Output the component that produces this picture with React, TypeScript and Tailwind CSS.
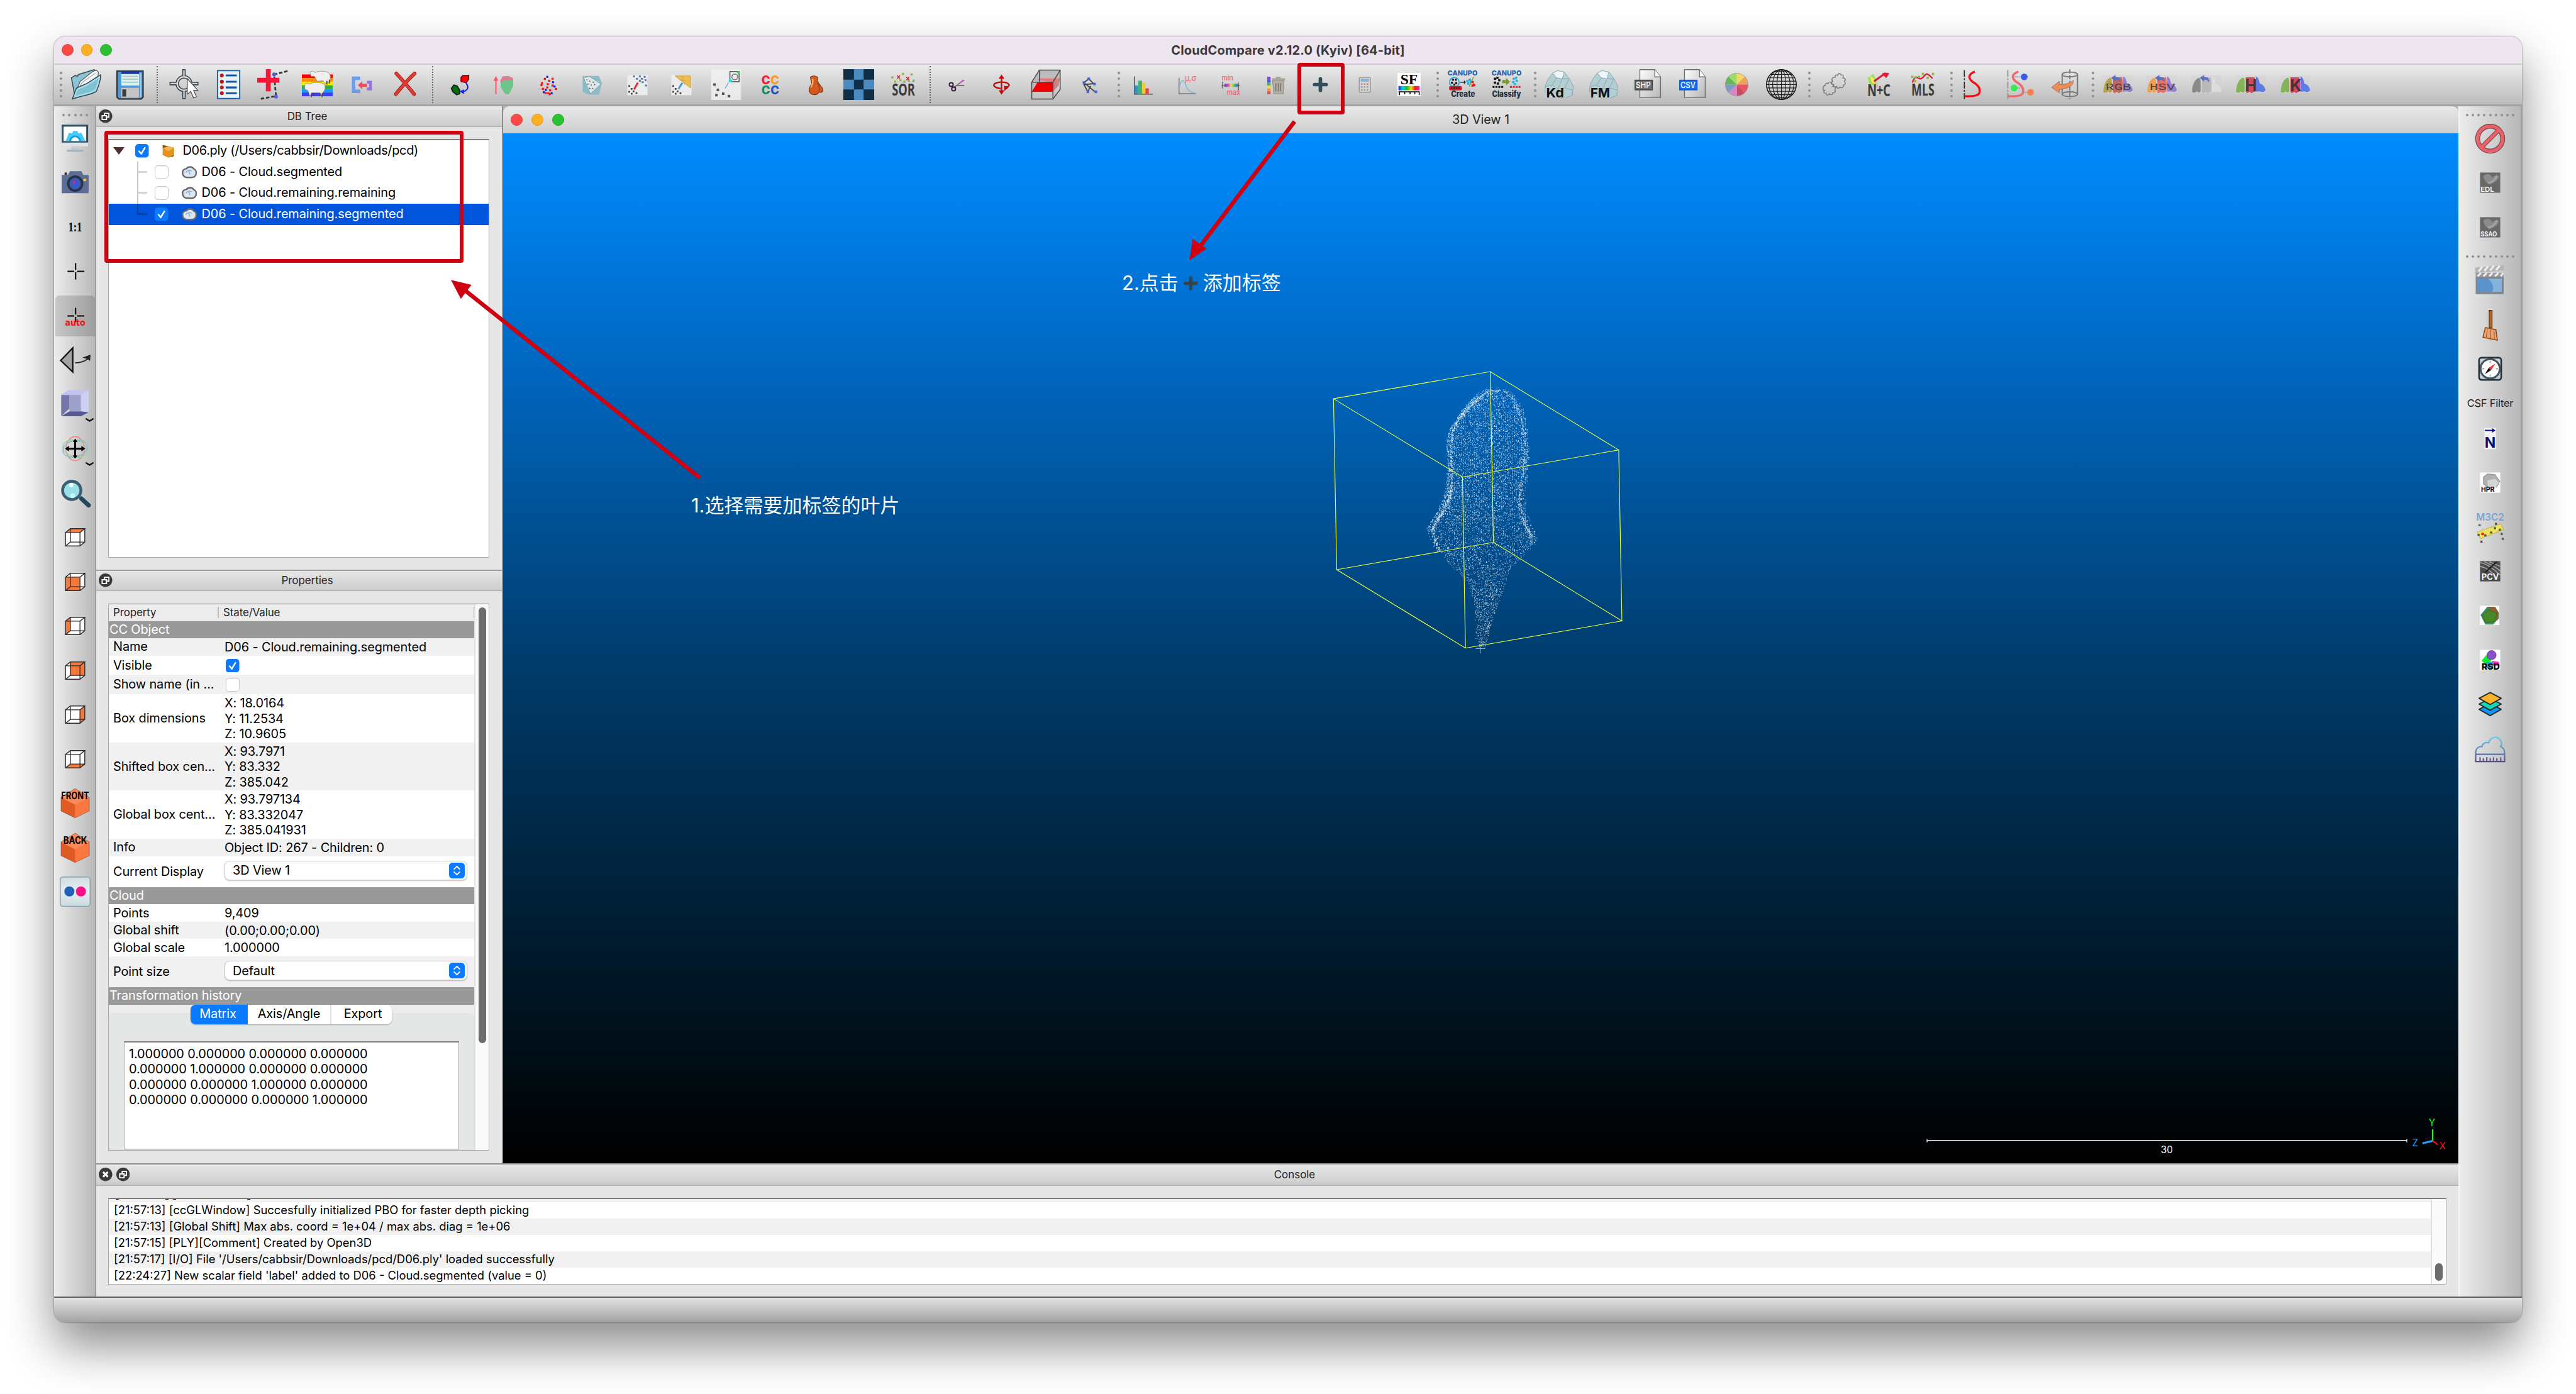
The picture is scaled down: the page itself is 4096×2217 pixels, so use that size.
import type { ReactNode } from 'react';

/* ---------- shared bits ---------- */

function Svg({ children, box = '0 0 64 64', cls = 'w-[49px] h-[49px]' }: { children: ReactNode; box?: string; cls?: string }) {
  return (
    <svg viewBox={box} className={cls + ' shrink-0 overflow-visible'} fill="none">
      {children}
    </svg>
  );
}

function Slot({ children }: { children: ReactNode }) {
  return <div className="w-[70.515px] h-full shrink-0 flex items-center justify-center">{children}</div>;
}

function VSlot({ children, on }: { children: ReactNode; on?: boolean }) {
  return (
    <div className="h-[70.515px] w-full shrink-0 flex items-center justify-center py-[3px]">
      <div className={'w-full h-full flex items-center justify-center ' + (on ? 'rounded-t-md bg-black/15' : '')}>{children}</div>
    </div>
  );
}

function Handle({ first }: { first?: boolean }) {
  return (
    <div className={(first ? 'w-[15.3px]' : 'w-[13.8px]') + ' h-full shrink-0 flex flex-col items-end justify-center gap-[5.2px] pr-[2px]'}>
      {[0, 1, 2, 3, 4].map((i) => (
        <span key={i} className="w-[4px] h-[4px] rounded-full bg-[#8f8f8f]" />
      ))}
    </div>
  );
}

function HHandle({ n, first }: { n: number; first?: boolean }) {
  return (
    <div className={(first ? 'h-[16px]' : 'h-[13.8px]') + ' w-full shrink-0 flex items-end justify-center gap-[5.2px]'}>
      {Array.from({ length: n }, (_, i) => (
        <span key={i} className="w-[4px] h-[4px] rounded-full bg-[#8f8f8f]" />
      ))}
    </div>
  );
}

function Sep() {
  return (
    <div className="w-[15.33px] h-full shrink-0 flex justify-center py-[2px]">
      <div className="border-l-2 border-dotted border-[#6a6a6a]" />
    </div>
  );
}

const SANS = 'Inter, sans-serif';

function Label({ x, y, s, c = '#222', t, w = 700, len, f = SANS }: { x: number; y: number; s: number; c?: string; t: string; w?: number; len?: number; f?: string }) {
  return (
    <text x={x} y={y} fontSize={s} fill={c} fontWeight={w} textAnchor="middle" fontFamily={f} textLength={len} lengthAdjust="spacingAndGlyphs">
      {t}
    </text>
  );
}

/* ---------- main toolbar icons ---------- */

const IOpen = (
  <Svg>
    <path d="M2 18l8-5 4 2 3-4 32-10 7 5v30L10 60z" fill="#8ec3d3" stroke="#2f4a55" strokeWidth="2" />
    <path d="M12 46L20 26 46 5l8-3 4 4-2 22z" fill="#f4f6f7" stroke="#555" strokeWidth="1.5" />
    <path d="M16 44L24 28 52 8" stroke="#9aa" strokeWidth="1.5" />
    <path d="M4 62l8-22c6-4 20-8 28-14L62 12c2 4-2 20-8 34-10 8-30 8-50 16z" fill="#a9dbe8" stroke="#2f4a55" strokeWidth="2" />
    <path d="M10 56l6-14c10-3 24-8 42-24-2 10-4 18-7 24-12 8-28 8-41 14z" fill="#6fb8cc" opacity=".7" />
  </Svg>
);
const ISave = (
  <Svg>
    <path d="M4 4h54v54l-4 4H8l-4-4z" fill="#4a9be0" stroke="#30353c" strokeWidth="3" />
    <rect x="13" y="6" width="37" height="28" fill="#dff1ef" />
    <rect x="13" y="5" width="37" height="5" fill="#1a35a8" />
    <path d="M15 15h33M15 21h33M15 27h33" stroke="#a9c9c9" strokeWidth="2.5" />
    <rect x="12" y="38" width="38" height="22" fill="#c4c4c4" stroke="#777" />
    <rect x="15" y="42" width="8" height="15" fill="#3d3d3d" />
    <path d="M53 8v50" stroke="#9fd0f5" strokeWidth="3" />
  </Svg>
);
const IPick = (
  <Svg>
    <g stroke="#3b444c" strokeWidth="7">
      <circle cx="32" cy="30" r="14" />
      <path d="M32 0v18M32 42v20M2 30h18M44 30h18" />
    </g>
    <g stroke="#cfd4d8" strokeWidth="3">
      <circle cx="32" cy="30" r="14" />
      <path d="M32 2v15M32 43v17M4 30h15M45 30h15" />
    </g>
    <path d="M39 20v32l7-6 6 14 6-3-6-13h9z" fill="#fff" stroke="#444" strokeWidth="1.5" />
  </Svg>
);
const IList = (
  <Svg>
    <rect x="9" y="3" width="46" height="58" fill="#e8f2fb" stroke="#1f5fa8" strokeWidth="2.5" />
    {[13, 26, 38, 50].map((y) => (
      <g key={y}>
        <circle cx="18" cy={y} r="4" fill="#c01818" />
        <path d={`M26 ${y}h23`} stroke="#1557a5" strokeWidth="4" />
      </g>
    ))}
  </Svg>
);
const IPolyPlus = (
  <Svg>
    <path d="M63 4L35 11 39 56 5 62" stroke="#333" strokeWidth="3.5" strokeDasharray="7 4" />
    <path d="M23 0v46M0 23h46" stroke="#ff1238" strokeWidth="10" />
    <circle cx="35" cy="11" r="4" fill="#5560d8" />
    <circle cx="39" cy="57" r="4" fill="#5560d8" />
  </Svg>
);
const ISheep = (
  <Svg>
    {['#ff0000', '#ff8a10', '#ffe600', '#2fae3a', '#2196f3', '#3c3cf0'].map((c, i) => (
      <rect key={c} x="0" y={11 + i * 7.5} width="64" height="7.6" fill={c} />
    ))}
    <g fill="#f1eeee" stroke="#8a8585" strokeWidth="1">
      <path d="M17 7c4-5 8-2 10 0 10-4 24-4 30 2 4 6 2 14-2 18l-4-1-2 5-5-7-12 1-6-10-7 0z" />
      <path d="M6 32c4-4 8-3 9-1 10-5 24-4 31 0 5 6 1 15-3 18l-3 7-3-7H20l-3 8-4-12-7-4z" />
    </g>
    <path d="M20 52v6M24 50v6M42 50v8M38 50v6M52 24v8M57 22v8" stroke="#444" strokeWidth="2" />
  </Svg>
);
const IBracket = (
  <Svg>
    <path d="M30 19H16v27h14" stroke="#6f9bea" strokeWidth="7" />
    <path d="M44 27h7v14h-7" stroke="#9a72dd" strokeWidth="6" />
    <path d="M25 33l9-8v5h10v7H34v5z" fill="#f6485f" />
  </Svg>
);
const IDelete = (
  <Svg>
    <path d="M12 9C24 22 38 38 49 52M50 9C36 22 22 38 11 52" stroke="#a31a12" strokeWidth="7.5" strokeLinecap="round" />
    <path d="M12 9C24 22 38 38 49 52M50 9C36 22 22 38 11 52" stroke="#e23b33" strokeWidth="5" strokeLinecap="round" />
  </Svg>
);
const IRegister = (
  <Svg>
    <path d="M34 26V17l4-4h12v8l-5 7z" fill="#ff0000" stroke="#5c0000" strokeWidth="2" />
    <path d="M19 33l7 2 5 8v8l-6 2-8-6-3-7z" fill="#0a6a10" stroke="#042c10" strokeWidth="2.5" />
    <path d="M44 29c8 8 4 16-8 18" stroke="#0b1cff" strokeWidth="2.5" />
    <path d="M31 46l9-4v10z" fill="#0b1cff" />
  </Svg>
);
const IMatch = (
  <Svg>
    <path d="M15 52V18" stroke="#ff5565" strokeWidth="2.5" />
    <path d="M10 24l5-10 5 10z" fill="#ff5565" />
    <path d="M24 24l5-9 12-1 10 5-1 9-24 5z" fill="#d97f93" />
    <path d="M25 28l8-5h18v12l-9 17h-7l-10-14z" fill="#6fc48b" />
  </Svg>
);
const dots = (pts: number[][], c: string, r = 2) => pts.map(([x, y], i) => <rect key={i} x={x - r} y={y - r} width={2 * r} height={2 * r} fill={c} />);
const ISubsample = (
  <Svg>
    {dots([[24, 20], [33, 24], [40, 20], [18, 29], [30, 31], [40, 34], [20, 41], [29, 38], [35, 44], [17, 33], [31, 50], [26, 50], [47, 41], [34, 52]], '#f01010', 2.1)}
    {dots([[29, 16], [41, 27], [44, 36], [26, 43], [38, 50], [22, 48]], '#1020f0', 2.1)}
  </Svg>
);
const IMesh = (
  <Svg>
    <path d="M11 14h34l6 15-6 24H22l-11-6z" fill="#7fbac6" opacity=".85" />
    <path d="M13 18l12-3 24 16-22 20z" fill="#dfe6e8" stroke="#76929a" />
    {dots([[20, 22], [26, 25], [33, 27], [22, 31], [29, 33], [36, 32], [26, 40], [32, 40]], '#444', 1)}
  </Svg>
);
const IC2C = (
  <Svg>
    <rect x="11" y="12" width="42" height="42" fill="#ececec" />
    {dots([[25, 15], [37, 15], [47, 16], [31, 20], [41, 20], [49, 23], [43, 27], [50, 34], [37, 24]], '#5c7fa8', 2)}
    {dots([[15, 35], [20, 41], [15, 47], [24, 46], [30, 50], [20, 51]], '#444', 1.8)}
    <path d="M25 42l8-14" stroke="#d03838" strokeWidth="4" />
  </Svg>
);
const IC2M = (
  <Svg>
    <rect x="11" y="12" width="42" height="42" fill="#ececec" />
    <path d="M19 14h32v25z" fill="#f0bd50" stroke="#b58527" />
    <path d="M27 22l14 2M33 14l6 18" stroke="#c89a3a" />
    {dots([[15, 35], [20, 41], [15, 47], [24, 46], [30, 50], [20, 51]], '#444', 1.8)}
    <path d="M26 41l8-13" stroke="#4b9bd8" strokeWidth="4" />
  </Svg>
);
const IPlane = (
  <Svg>
    <rect x="1" y="0" width="62" height="64" fill="#f0f0f0" opacity=".85" />
    <rect x="40" y="5" width="19" height="21" stroke="#555" strokeWidth="2" />
    <circle cx="50" cy="16" r="6" stroke="#777" strokeWidth="2" />
    <circle cx="58" cy="7" r="3" fill="#39d353" />
    <circle cx="41" cy="24" r="3.5" fill="#19e0e0" />
    <path d="M30 40l7-12" stroke="#86abcc" strokeWidth="2" />
    {dots([[8, 32], [15, 43], [12, 54], [26, 51], [38, 56]], '#555', 2.6)}
  </Svg>
);
const ICCCC = (
  <Svg>
    <Label x={23} y={31} s={24} c="#ff1430" t="C" w={800} />
    <Label x={42} y={31} s={24} c="#ff9a16" t="C" w={800} />
    <Label x={23} y={52} s={24} c="#138a5e" t="C" w={800} />
    <Label x={42} y={52} s={24} c="#1d52c8" t="C" w={800} />
  </Svg>
);
const IBone = (
  <Svg>
    <path d="M23 17c2-4 12-4 15 0l-1 7 4 6 7 10c3 7-3 10-7 7-3 8-16 8-20 0-2-8 2-13 5-16z" fill="#d35a1c" stroke="#7c2d0a" strokeWidth="1.5" />
    <path d="M27 20c2 4 0 12-3 18" stroke="#ffae78" strokeWidth="3" />
    <path d="M38 28c2 4 4 10 3 16" stroke="#8a3510" strokeWidth="1.5" />
  </Svg>
);
const IChecker = (
  <Svg>
    <rect width="64" height="64" fill="#0f2e46" />
    <path d="M22 0h20v22H22zM0 22h22v20H0zM42 22h22v20H42zM22 42h20v22H22z" fill="#4a8cc2" />
  </Svg>
);
const ISOR = (
  <Svg>
    {dots([[9, 17], [31, 10], [49, 11], [15, 26], [34, 26], [43, 24], [53, 24], [26, 23]], '#8bb34f', 2.2)}
    <path d="M19 13l6 7m0-7l-6 7M38 16l6 7m0-7l-6 7" stroke="#c92a3a" strokeWidth="2" />
    <Label x={32} y={55} s={34} c="#3b3b3b" t="SOR" len={48} f="Open Sans, sans-serif" />
  </Svg>
);
const IScissors = (
  <Svg>
    <path d="M24 39l20-16M28 34l18 0" stroke="#777" strokeWidth="2.5" />
    <path d="M36 29l10-6" stroke="#cc59cc" strokeWidth="2.5" />
    <circle cx="19" cy="32" r="4" stroke="#3a1740" strokeWidth="2.5" />
    <circle cx="24" cy="41" r="4" stroke="#3a1740" strokeWidth="2.5" />
  </Svg>
);
const IMove = (
  <Svg>
    <g stroke="#c00808" strokeWidth="3">
      <path d="M32 16v32" />
      <path d="M48 33c-2-5-9-6-16-6s-16 2-16 6 8 7 14 7M48 33c0 2-4 4-9 5" />
    </g>
    <path d="M32 11l6 9H26zM32 53l6-9H26zM37 34l10 4-9 7z" fill="#c00808" />
  </Svg>
);
const IClipBox = (
  <Svg>
    <path d="M3 26L18 3h43v20L46 47H3z" fill="#bdbdbd" />
    <path d="M13 22l5-3h43l-4 10-9 0z" fill="#e77b7b" />
    <path d="M2 47L14 27h32l0 20z" fill="#f00000" />
    <path d="M46 27l14-8-2 15-12 13z" fill="#c98282" />
    <path d="M2 27h44v35H2zM2 27L18 2h43v40L46 62M46 27L61 2M18 2v24" stroke="#4a4a4a" strokeWidth="2" />
  </Svg>
);
const IPolyTrace = (
  <Svg>
    <path d="M29 20L19 28l23 19M29 20l10 10-20 2 8 15 6-12" stroke="#4a4a4a" strokeWidth="2.5" />
    {dots([[29, 20], [19, 28], [41, 31], [27, 47], [44, 47]], '#3f5fe0', 2.6)}
  </Svg>
);
const IHist = (
  <Svg>
    <path d="M14 15v37h38" stroke="#555" strokeWidth="2" />
    <rect x="14" y="34" width="8" height="17" fill="#3f8fbf" />
    <rect x="22" y="24" width="8" height="27" fill="#3db577" />
    <rect x="30" y="28" width="7" height="23" fill="#eacb3a" />
    <rect x="37" y="40" width="7" height="11" fill="#ee3f4c" />
  </Svg>
);
const IStats = (
  <Svg>
    <path d="M14 18v33h35" stroke="#777" strokeWidth="2" />
    <path d="M15 38c2-16 8-18 12-8 4 12 8 18 20 20" stroke="#7fb7d8" strokeWidth="2" />
    <Label x={38} y={25} s={17} c="#f4707c" t="μ,σ" w={500} len={24} />
  </Svg>
);
const IMinMax = (
  <Svg>
    <defs>
      <linearGradient id="rb">
        <stop offset="0" stopColor="#6a3ad0" />
        <stop offset=".3" stopColor="#e050b0" />
        <stop offset=".5" stopColor="#f4e04a" />
        <stop offset=".75" stopColor="#49c96a" />
        <stop offset="1" stopColor="#3a62d0" />
      </linearGradient>
    </defs>
    <Label x={23} y={23} s={15} c="#f4606e" t="min" w={500} len={24} />
    <Label x={36} y={53} s={15} c="#f4606e" t="max" w={500} len={28} />
    <path d="M13 26v14M46 28v16M11 34h38" stroke="#666" strokeWidth="2" />
    <rect x="17" y="30" width="27" height="7" fill="url(#rb)" />
  </Svg>
);
const ITrash = (
  <Svg>
    {['#7b46d8', '#4a56e0', '#45b06a', '#e8df4d', '#f2983c', '#ee4a68'].map((c, i) => (
      <rect key={c} x="13" y={16 + i * 6} width="7" height="6" fill={c} />
    ))}
    <path d="M24 24h24l-2 27H27z" fill="#b4b0a8" stroke="#8d897f" strokeWidth="1.5" />
    <path d="M23 19h27v5H23zM31 16h10v3H31z" fill="#a9a59b" />
    <path d="M31 29v17M36 29v17M41 29v17" stroke="#77736a" strokeWidth="2" />
  </Svg>
);
const IPlus = (
  <Svg>
    <path d="M32 20v24M20 32h24" stroke="#33505a" strokeWidth="7.5" strokeLinecap="round" />
  </Svg>
);
const ICalc = (
  <Svg>
    <rect x="20" y="17" width="23" height="31" rx="2" fill="#d6d6d6" stroke="#999" strokeWidth="2" />
    <rect x="23" y="20" width="17" height="6" fill="#89b4dc" />
    {dots([[25, 31], [31, 31], [25, 37], [31, 37], [37, 37], [25, 43], [31, 43], [37, 43]], '#999', 1.6)}
    {dots([[37, 31]], '#e86a6a', 1.6)}
  </Svg>
);
const ISF = (
  <Svg>
    <defs>
      <linearGradient id="sf">
        <stop offset="0" stopColor="#1a20d0" />
        <stop offset=".2" stopColor="#10d0f0" />
        <stop offset=".4" stopColor="#20c020" />
        <stop offset=".6" stopColor="#f0e010" />
        <stop offset=".78" stopColor="#f02010" />
        <stop offset="1" stopColor="#f020d0" />
      </linearGradient>
    </defs>
    <rect x="8" y="8" width="48" height="48" fill="#fff" />
    <Label x={32} y={31} s={29} c="#000" t="SF" len={36} f="Liberation Serif, serif" />
    <rect x="10" y="35" width="44" height="9" fill="url(#sf)" />
    <path d="M10 47h44M12 46v8M23 46v6M34 46v6M44 46v6M53 46v8" stroke="#000" strokeWidth="2" />
  </Svg>
);
const ICanupoCreate = (
  <Svg>
    <Label x={32} y={13} s={14} c="#1d63b5" t="CANUPO" w={800} len={62} />
    <circle cx="15" cy="27" r="10" stroke="#21aee6" strokeWidth="2.5" />
    {dots([[12, 22], [18, 22], [10, 28], [15, 32], [19, 29]], '#111', 2)}
    <path d="M27 27h9" stroke="#222" strokeWidth="2" />
    <path d="M35 23l4 4-4 4z" fill="#222" />
    <path d="M55 16L46 36" stroke="#86a63a" strokeWidth="2" />
    {dots([[42, 25], [47, 22], [44, 30], [49, 26]], '#21aee6', 2.4)}
    {dots([[53, 27], [56, 33], [53, 34]], '#f01818', 2.4)}
    <rect x="4" y="35" width="27" height="9" rx="4" fill="#e21c2c" />
    <path d="M8 39h20" stroke="#111" strokeWidth="3" strokeDasharray="3 2" />
    <Label x={33} y={58} s={17} c="#1d2a38" t="Create" w={800} len={50} />
  </Svg>
);
const ICanupoClassify = (
  <Svg>
    <Label x={32} y={13} s={14} c="#1d63b5" t="CANUPO" w={800} len={62} />
    {dots([[8, 20], [13, 18], [17, 23], [8, 28], [14, 30]], '#111', 2.3)}
    <path d="M23 23h8v-5l8 8-8 8v-5h-8z" fill="#7b9a25" />
    {dots([[47, 20], [52, 18], [46, 27], [53, 24], [50, 31]], '#21aee6', 2.3)}
    <path d="M3 37h24" stroke="#111" strokeWidth="4" strokeDasharray="4 2" />
    <path d="M39 37h24" stroke="#f01818" strokeWidth="4" strokeDasharray="4 2" />
    <Label x={32} y={58} s={17} c="#1d2a38" t="Classify" w={800} len={60} />
  </Svg>
);
const rock = (
  <>
    <path d="M2 48C0 34 8 20 18 8l10-5 14 3 11 14 8 16-2 18-14 6H10z" fill="#b4cfd3" />
    <path d="M18 8l12-5 12 4-4 14-12-4z" fill="#edf6fb" />
    <g stroke="#8aa8ae" strokeWidth="1.3">
      <path d="M2 48C0 34 8 20 18 8l10-5 14 3 11 14 8 16-2 18-14 6M18 8l8 10 12 2 4-14M26 18l-9 15-14 3M38 20l14 0M17 33l12 8 9-21M29 41l14-2 9-19M43 39l16 4M29 41l3 10" />
    </g>
  </>
);
const IKd = (
  <Svg>
    {rock}
    <Label x={23} y={59} s={27} c="#111" t="Kd" len={37} />
  </Svg>
);
const IFM = (
  <Svg>
    {rock}
    <Label x={24} y={59} s={27} c="#111" t="FM" len={41} />
  </Svg>
);
function FileIcon({ t, c, b }: { t: string; c: string; b: string }) {
  return (
    <Svg>
      <defs>
        <linearGradient id="fg" x2="1" y2="1">
          <stop offset="0" stopColor="#fff" />
          <stop offset="1" stopColor="#b5b5b5" />
        </linearGradient>
      </defs>
      <path d="M15 1h31l12 15v43H15z" fill="url(#fg)" stroke="#6c6c6c" strokeWidth="1.8" />
      <path d="M46 1v15h12" fill="#f6f6f6" stroke="#6c6c6c" strokeWidth="1.8" />
      <rect x="5" y="23" width="36" height="20" fill={c} stroke={b} strokeWidth="2" />
      <Label x={22} y={39} s={17} c="#fff" t={t} w={500} len={31} />
    </Svg>
  );
}
const pieCols = ['#f0d86a', '#eda35c', '#e8545f', '#c64a62', '#d688c4', '#7a9cc9', '#68b45e', '#a3dc62'];
const IPie = (
  <Svg>
    {pieCols.map((c, i) => {
      const a = (i * Math.PI) / 4 - Math.PI / 2;
      const b = a + Math.PI / 4;
      return <path key={c} d={`M32 32L${32 + 24 * Math.cos(a)} ${32 + 24 * Math.sin(a)}A24 24 0 0 1 ${32 + 24 * Math.cos(b)} ${32 + 24 * Math.sin(b)}z`} fill={c} />;
    })}
    <circle cx="32" cy="32" r="23.5" stroke="#999" strokeWidth="1" />
  </Svg>
);
const IGlobe = (
  <Svg>
    <g stroke="#1c1c1c" strokeWidth="1.5">
      <circle cx="32" cy="32" r="31" strokeWidth="2" />
      <ellipse cx="32" cy="32" rx="26" ry="31" />
      <ellipse cx="32" cy="32" rx="18" ry="31" />
      <ellipse cx="32" cy="32" rx="9" ry="31" />
      <path d="M32 1v62M1 32h62M2 25h60M2 39h60M5 18h54M5 46h54M9 11h46M9 53h46M17 5h30M17 59h30" />
    </g>
  </Svg>
);
const IClouds = (
  <Svg>
    <g stroke="#777" strokeWidth="1.8">
      <path d="M34 17c-1-5 3-6 5-4 1-5 6-5 7-1 5-1 6 4 4 6 5 0 7 5 3 7 4 4 2 8-2 8 1 5-4 7-7 4-2 4-7 3-7-1-4 2-7-1-6-4-5 1-6-5-2-7-4-3-1-9 5-8z" />
      <path d="M14 33c-1-4 3-5 5-3 2-5 7-4 7 0 4 0 5 4 3 6 5-1 7 4 4 7 3 3 0 7-4 6 0 5-5 5-7 2-2 5-8 3-7-1-5 1-6-4-3-6-5-1-4-9 2-11z" />
    </g>
  </Svg>
);
const INC = (
  <Svg>
    <path d="M9 18l11-8 8 15-4 10-11-3z" fill="#9be05a" />
    <path d="M13 14l9 5 3 14-8-6z" fill="#f4e95e" />
    <path d="M21 28l9 4 1 8-9-2z" fill="#f2a98e" />
    <path d="M22 25l24-17" stroke="#e01638" strokeWidth="4" />
    <path d="M53 9l-3-1-11 1 8 9z" fill="#e01638" stroke="#e01638" />
    <Label x={32} y={56} s={34} c="#3b3b3b" t="N+C" len={48} f="Open Sans, sans-serif" />
  </Svg>
);
const IMLS = (
  <Svg>
    <path d="M10 28c6-16 10-10 16-8 6 1 10-10 14-10s6 4 12 9" stroke="#e01638" strokeWidth="3" />
    {dots([[10, 16], [17, 17], [24, 16], [32, 10], [53, 10], [42, 18], [16, 25]], '#8bb34f', 2.4)}
    <Label x={32} y={55} s={34} c="#3b3b3b" t="MLS" len={48} f="Open Sans, sans-serif" />
  </Svg>
);
const IProfile = (
  <Svg>
    <path d="M7 2v60" stroke="#222" strokeWidth="2" strokeDasharray="14 3 4 3" />
    <path d="M29 5C16 10 14 18 24 26c14 8 17 16 14 24-3 6-16 7-31 6" stroke="#f50d12" strokeWidth="4.5" />
  </Svg>
);
const IProfile2 = (
  <Svg>
    <path d="M6 2v60" stroke="#888" strokeWidth="2" strokeDasharray="14 3 4 3" />
    <path d="M28 5C14 10 13 18 23 26c14 8 17 16 14 24-3 6-16 7-31 6" stroke="#f4646e" strokeWidth="4.5" />
    <path d="M20 16h13M20 39h12M37 48h10" stroke="#999" strokeWidth="2" strokeDasharray="3 1" />
    <circle cx="40" cy="16" r="7" fill="#3c59ee" />
    <circle cx="19" cy="39" r="7" fill="#35ea50" />
    <circle cx="53" cy="48" r="7" fill="#f58050" />
  </Svg>
);
const ICylinder = (
  <Svg>
    <g stroke="#777" strokeWidth="2.4">
      <ellipse cx="42" cy="11" rx="16" ry="5" />
      <path d="M26 11v41M58 11v41" />
      <ellipse cx="42" cy="52" rx="16" ry="5" />
      <path d="M42 0v62" strokeDasharray="9 3" />
    </g>
    <path d="M4 38l16-13v7c12 0 24-3 29-9 2 11-10 18-29 19v7z" fill="#f18a54" stroke="#8a6a58" strokeWidth="1" />
  </Svg>
);
function Leaves({ a, b, c, t }: { a: string; b: string; c: string; t: string }) {
  return (
    <Svg>
      <rect x="0" y="13" width="64" height="37" fill="#d2d2d2" opacity=".5" />
      <path d="M2 46c0-12 6-26 14-28 4 0 4 4 4 28l-4 3-4-3-4 3-6-1z" fill={a} />
      <path d="M22 17h18c3 4 3 22 1 30l-4 1-3 2-4-3-5 3-3-3z" fill={b} />
      <path d="M43 16c4-1 7 6 8 14 8 2 11 8 12 14-4 4-8 4-12 2l-8 1z" fill={c} />
      {t.length === 1 && <Label x={33} y={46} s={33} c="#4a3238" t={t} />}
      {t.length > 1 && <Label x={33} y={43} s={20} c="#4a4050" t={t} w={500} len={53} f="Liberation Mono, monospace" />}
      {t.length !== 1 && <path d="M18 18l9-6v4c9 0 11 4 10 12-2-5-5-6-10-6v4z" fill="#5a6fc0" />}
    </Svg>
  );
}
const groups: ReactNode[][] = [
  [IOpen, ISave],
  [IPick, IList, IPolyPlus, ISheep, IBracket, IDelete],
  [IRegister, IMatch, ISubsample, IMesh, IC2C, IC2M, IPlane, ICCCC, IBone, IChecker, ISOR],
  [IScissors, IMove, IClipBox, IPolyTrace],
];
const handled: ReactNode[][] = [
  [IHist, IStats, IMinMax, ITrash, IPlus, ICalc, ISF],
  [ICanupoCreate, ICanupoClassify],
  [IKd, IFM, <FileIcon t="SHP" c="#6f6f6f" b="#3f3f3f" />, <FileIcon t="CSV" c="#1671f2" b="#0a55d0" />, IPie, IGlobe],
  [IClouds, INC, IMLS],
  [IProfile, IProfile2, ICylinder],
  [
    <Leaves a="#b7a04e" b="#c8665c" c="#9483cc" t="RGB" />,
    <Leaves a="#eea04e" b="#e8705f" c="#9a7fd0" t="HSV" />,
    <Leaves a="#8a8a8a" b="#b8b8b8" c="#dcdcdc" t="" />,
    <Leaves a="#84b35a" b="#d8485a" c="#5b7be8" t="H" />,
    <Leaves a="#84b35a" b="#d8485a" c="#5b7be8" t="K" />,
  ],
];

/* ---------- left toolbar icons ---------- */

const LMonitor = (
  <Svg>
    <rect x="4" y="3" width="55" height="38" fill="#2f5063" />
    <rect x="8" y="7" width="47" height="30" fill="#fff" />
    <path d="M12 37l4-9 3-8 7 1 2-5h8l3 5 6-1 4 8 4 9z" fill="#45cdf8" />
    <path d="M20 37a12 12 0 0 1 24 0h-4a8 8 0 0 0-16 0z" fill="#1aa0e0" />
    <path d="M24 37a8 8 0 0 1 16 0z" fill="#fff" />
    <path d="M4 40h55v8H4z" fill="#dfe3e6" />
    <path d="M25 48h14l2 8H23z" fill="#c2cad0" />
    <path d="M15 55h34v4H15z" fill="#a6b2bb" />
  </Svg>
);
const LCamera = (
  <Svg>
    <path d="M4 16h13l4-8h24l4 8h11v38H4z" fill="#5c6c92" />
    <rect x="10" y="11" width="5" height="5" fill="#333" />
    <circle cx="32" cy="34" r="17" fill="#26324a" />
    <circle cx="32" cy="34" r="12" fill="#3c5cae" />
    <circle cx="32" cy="33" r="7" fill="#3a55d8" />
    <rect x="28" y="29" width="4" height="4" fill="#f02860" />
    <rect x="49" y="24" width="6" height="5" fill="#f5c52c" />
  </Svg>
);
const LOne = (
  <Svg>
    <Label x={32} y={40} s={27} c="#000" t="1:1" len={28} f="Liberation Serif, serif" />
  </Svg>
);
const LCross = (
  <Svg>
    <path d="M33 15v14M33 34v15M16 32h14M36 32h15" stroke="#000" strokeWidth="2.6" />
  </Svg>
);
const LAuto = (
  <Svg>
    <path d="M33 15v14M33 34v11M16 32h14M36 32h15" stroke="#000" strokeWidth="2.6" />
    <Label x={32} y={52} s={19} c="#f01212" t="auto" w={800} len={42} f="DejaVu Sans, sans-serif" />
  </Svg>
);
const LView = (
  <Svg>
    <path d="M2 33L27 7v50z" fill="#a3a3a3" stroke="#111" strokeWidth="3" />
    <path d="M32 38c12 0 18-3 26-8" stroke="#222" strokeWidth="2.5" />
    <path d="M47 27l17-6-1 13-6-4z" fill="#222" />
  </Svg>
);
const Drop = <path d="M54 61l8 5 8-5" stroke="#111" strokeWidth="3" />;
const LCube = (
  <Svg>
    <path d="M3 12L20 2v38L3 56z" fill="#7377a8" />
    <path d="M3 12L20 2h40L44 12z" fill="#c1c4f0" />
    <path d="M20 12h24v34H20z" fill="#9da0c9" />
    <path d="M44 12L60 2v46L44 56z" fill="#ccd0f4" />
    <path d="M3 56l17-10h24l16 2-16 8z" fill="#555a96" />
    {Drop}
  </Svg>
);
const LPan = (
  <Svg>
    <g strokeWidth="2">
      <ellipse cx="32" cy="32" rx="19" ry="25" stroke="#e88a8a" />
      <ellipse cx="32" cy="32" rx="26" ry="17" stroke="#93da8b" transform="rotate(15 32 32)" />
      <ellipse cx="32" cy="32" rx="26" ry="17" stroke="#87b9dd" transform="rotate(-15 32 32)" />
    </g>
    <path d="M32 16v32M17 32h30" stroke="#000" strokeWidth="4" />
    <path d="M32 11l5 7H27zM32 53l5-7H27zM11 32l8-6v12zM53 32l-8-6v12z" fill="#000" />
    {Drop}
  </Svg>
);
const LZoom = (
  <Svg>
    <path d="M45 43l15 14" stroke="#24485c" strokeWidth="9" strokeLinecap="round" />
    <circle cx="25" cy="26" r="19" fill="#98e0e6" stroke="#3d5d70" strokeWidth="6" />
    <circle cx="24" cy="15" r="4.5" fill="#eafcff" />
    <circle cx="27" cy="37" r="5" fill="#c9f5f8" />
  </Svg>
);
function BoxIcon({ face }: { face: string }) {
  return (
    <Svg>
      <path d="M12 22l10-8h30v28l-10 8H12z" fill="#fdfdfd" />
      <path d={face} fill="#f5793a" />
      <path d="M12 22h30v28H12zM12 22l10-8h30L42 22M52 14v28l-10 8M22 14v28M22 42L12 50M22 42h30" stroke="#2d2d2d" strokeWidth="1.8" />
    </Svg>
  );
}
function Brick({ t, len }: { t: string; len: number }) {
  return (
    <Svg>
      <path d="M3 20L32 2l29 18v28L32 62 3 48z" fill="#f4733c" stroke="#7a4a36" strokeWidth="1.5" />
      <path d="M3 21l29 14v27L3 48z" fill="#e05a26" />
      <path d="M32 35l29-14v27L32 62z" fill="#fb7840" />
      <path d="M3 20L32 2l29 18-29 15z" fill="#fb8a58" />
      <Label x={32} y={23} s={20} c="#000" t={t} len={len} />
    </Svg>
  );
}
const LFlickr = (
  <Svg>
    <defs>
      <linearGradient id="fl" x2="0" y2="1">
        <stop offset="0" stopColor="#cfdde2" />
        <stop offset=".5" stopColor="#e6eff2" />
        <stop offset="1" stopColor="#c9dadf" />
      </linearGradient>
    </defs>
    <rect x="1" y="1" width="62" height="61" rx="6" fill="url(#fl)" stroke="#8c9fa6" strokeWidth="2" />
    <circle cx="20" cy="31" r="10.5" fill="#1f62b8" />
    <circle cx="44" cy="31" r="10.5" fill="#fb1186" />
  </Svg>
);
const leftIcons: ReactNode[] = [
  LMonitor, LCamera, LOne, LCross, LAuto, LView, LCube, LPan, LZoom,
  <BoxIcon face="M12 22l10-8h30L42 22z" />,
  <BoxIcon face="M12 22h30v28H12z" />,
  <BoxIcon face="M12 22l10-8v28L12 50z" />,
  <BoxIcon face="M22 14h30v28H22z" />,
  <BoxIcon face="M42 22l10-8v28l-10 8z" />,
  <BoxIcon face="M12 50l10-8h30l-10 8z" />,
  <Brick t="FRONT" len={58} />,
  <Brick t="BACK" len={49} />,
  LFlickr,
];

/* ---------- right toolbar icons ---------- */

const RForbid = (
  <Svg>
    <circle cx="32" cy="32" r="26" stroke="#6c4a4e" strokeWidth="10" />
    <path d="M15 49L49 15" stroke="#6c4a4e" strokeWidth="9" />
    <circle cx="32" cy="32" r="26" stroke="#ec6169" strokeWidth="7" />
    <path d="M14 50L50 14" stroke="#ec6169" strokeWidth="6.5" />
  </Svg>
);
function Shade({ t, len }: { t: string; len: number }) {
  return (
    <Svg>
      <rect x="11" y="11" width="42" height="42" fill="#686868" />
      <path d="M18 18c8-6 16-4 18 4 6-6 12-8 14-2-2 8-12 14-20 16-6-4-12-10-12-18z" fill="#8c8c8c" />
      <path d="M28 32c8 0 14-6 18-14" stroke="#a8a8a8" strokeWidth="3" />
      <Label x={12 + len / 2} y={51} s={14} c="#fff" t={t} w={600} len={len} />
    </Svg>
  );
}
const RClap = (
  <Svg>
    <path d="M1 6l60-5v10L1 18z" fill="#b5b5b5" />
    <path d="M8 14l8-10M20 13l8-10M32 12l8-10M44 11l8-9" stroke="#eee" strokeWidth="4" />
    <path d="M2 17h58v8H2z" fill="#9a9a9a" />
    <path d="M6 24l7-7M18 24l7-7M30 24l7-7M42 24l7-7M54 24l5-7" stroke="#eee" strokeWidth="4" />
    <rect x="2" y="25" width="58" height="36" fill="#7c8590" />
    <rect x="6" y="29" width="50" height="27" fill="#5a94cd" />
    <path d="M28 29h28v27H36c6-8 0-20-8-27z" fill="#86b3de" />
  </Svg>
);
const RBroom = (
  <Svg>
    <path d="M30 2h6v36h-6z" fill="#b36524" stroke="#5a2b08" strokeWidth="1.5" />
    <path d="M22 38l22 4 3 22-30-6z" fill="#eaa273" stroke="#8a4510" strokeWidth="2" />
    <path d="M26 42l-2 16M33 43v17M40 44l1 17" stroke="#a85c28" strokeWidth="1.5" />
  </Svg>
);
const RCompass = (
  <Svg>
    <rect x="9" y="9" width="46" height="46" rx="5" fill="#c9d0d6" stroke="#26313a" strokeWidth="3.5" />
    <circle cx="32" cy="32" r="20" fill="#fff" stroke="#435360" strokeWidth="4" />
    <path d="M32 16v4M32 44v4M16 32h4M44 32h4" stroke="#888" strokeWidth="2" />
    <path d="M43 21L34 35l-5-5z" fill="#f2323c" />
    <path d="M21 43l8-13 5 5z" fill="#111" />
  </Svg>
);
const RN = (
  <Svg>
    <rect x="20" y="10" width="24" height="44" fill="#f3f3f8" />
    <path d="M21 15h16" stroke="#0b1273" strokeWidth="2.5" />
    <path d="M36 10l7 5-7 5z" fill="#0b1273" />
    <Label x={32} y={51} s={30} c="#0b1273" t="N" />
  </Svg>
);
const RHPR = (
  <Svg>
    <rect x="11" y="11" width="42" height="42" fill="#fdfdfd" />
    <path d="M18 20l8-6 16 1 10 14-6 12-18 2-10-8z" fill="#b0b0b0" stroke="#777" />
    <path d="M26 28l16-4 8 8-6 10-16 1z" fill="#d5d5d5" />
    <Label x={27} y={51} s={14} c="#000" t="HPR" len={28} />
  </Svg>
);
const RM3 = (
  <Svg>
    <Label x={32} y={18} s={21} c="#7ba4d4" t="M3C2" w={600} len={58} />
    <path d="M5 42L54 25l6 12L12 56z" fill="#ece35b" stroke="#a9a24a" />
    {dots([[10, 28], [17, 46], [8, 48], [44, 25], [42, 34], [52, 37], [34, 43], [22, 49], [14, 62], [56, 46], [58, 56]], '#555', 2.2)}
    {dots([[16, 46]], '#f02a2a', 2.4)}
  </Svg>
);
const RPCV = (
  <Svg>
    <rect x="11" y="11" width="42" height="42" fill="#4c4c4c" />
    <path d="M11 14c14 2 26 12 42 26M11 22c12 2 24 10 36 26M20 12c10 6 22 8 33 20M30 12l23 10" stroke="#a8a8a8" strokeWidth="2" />
    <path d="M46 12L20 36" stroke="#222" strokeWidth="3" />
    <Label x={32} y={50} s={17} c="#fff" t="PCV" w={600} len={36} />
  </Svg>
);
const RPoly = (
  <Svg>
    <rect x="11" y="11" width="40" height="40" fill="#fdfdfd" />
    <path d="M12 30l14-17 16 0 8 12v12L38 50H22z" fill="#3e8b5e" />
    <path d="M28 13h14l8 13-3 16-10-10z" fill="#8c5f30" />
    <path d="M16 32l12-13 18 8-5 17-18 2z" fill="#458a26" stroke="#2c5e16" />
  </Svg>
);
const RRSD = (
  <Svg>
    <rect x="11" y="11" width="42" height="42" fill="#fff" />
    <path d="M14 34l14-17 6 16-8 10z" fill="#12ee28" />
    <circle cx="35" cy="22" r="9.5" fill="#8a4fc8" stroke="#4a2880" />
    <path d="M36 34l14 2 2 8H34z" fill="#ff30c8" />
    <path d="M24 36h14v14H22z" fill="#16b0d8" />
    <Label x={33} y={52} s={18} c="#000" t="RSD" w={800} len={38} />
  </Svg>
);
const RLayers = (
  <Svg>
    <g stroke="#24272b" strokeWidth="2.5" strokeLinejoin="round">
      <path d="M32 30l23 12-23 13L9 42z" fill="#1398f2" />
      <path d="M32 19l23 12-23 13L9 31z" fill="#12d8b0" />
      <path d="M32 7l23 12-23 13L9 19z" fill="#f7b428" />
    </g>
  </Svg>
);
const RRuler = (
  <Svg>
    <defs>
      <linearGradient id="rc" x2="0" y2="1">
        <stop offset="0" stopColor="#63cbe8" />
        <stop offset=".6" stopColor="#5f83b5" />
        <stop offset="1" stopColor="#5b4a80" />
      </linearGradient>
    </defs>
    <path
      d="M2 59V40c0-8 6-13 13-12 1-7 8-10 14-8C33 8 46 4 53 14c4 5 3 11 1 14 6 2 8 8 8 14v17zM2 44h61M11 59V50M18 59V52M25 59V50M32 59V52M39 59V50M46 59V52M54 59V50"
      stroke="url(#rc)"
      strokeWidth="2.8"
    />
  </Svg>
);
const rightA: ReactNode[] = [RForbid, <Shade t="EDL" len={28} />, <Shade t="SSAO" len={34} />];
const rightB: ReactNode[] = [RClap, RBroom, RCompass];
const rightC: ReactNode[] = [RN, RHPR, RM3, RPCV, RPoly, RRSD, RLayers, RRuler];

/* ---------- window pieces ---------- */

function Lights({ gap }: { gap: string }) {
  return (
    <div className={'flex items-center ' + gap}>
      <span className="w-[18.5px] h-[18.5px] rounded-full bg-[#fc4948] border border-[#e0403c]" />
      <span className="w-[18.5px] h-[18.5px] rounded-full bg-[#fdb024] border border-[#dd981c]" />
      <span className="w-[18.5px] h-[18.5px] rounded-full bg-[#2ac131] border border-[#20a528]" />
    </div>
  );
}

function DockButton({ close }: { close?: boolean }) {
  return (
    <svg viewBox="0 0 28 28" className="w-[21.5px] h-[21.5px]" fill="none">
      <circle cx="14" cy="14" r="14" fill="#393939" />
      {close ? (
        <path d="M9 9l10 10M19 9L9 19" stroke="#fff" strokeWidth="4" />
      ) : (
        <path d="M7 13h9v8H7zM12 12V8h9v8h-4" stroke="#fff" strokeWidth="2.4" />
      )}
    </svg>
  );
}

function DockHeader({ title, cls, close }: { title: string; cls: string; close?: boolean }) {
  return (
    <div className={'relative shrink-0 flex items-center bg-gradient-to-b from-[#e7e7e7] to-[#cdcdcd] border-b-2 border-[#b4b4b4] ' + cls}>
      <div className="flex gap-[6px] pl-[4px]">
        {close && <DockButton close />}
        <DockButton />
      </div>
      <div className={'absolute inset-0 flex items-center justify-center pt-[2px] text-[16.900px] text-[#242424] ' + (close ? 'pl-[55px]' : 'pl-[26px]')}>{title}</div>
    </div>
  );
}

function Check({ on }: { on?: boolean }) {
  return on ? (
    <svg viewBox="0 0 28 28" className="w-[21.5px] h-[21.5px] shrink-0" fill="none">
      <rect width="28" height="28" rx="6.5" fill="#0a7aff" />
      <path d="M8 15l4.5 5.5L20 8" stroke="#fff" strokeWidth="3.2" strokeLinecap="round" strokeLinejoin="round" />
    </svg>
  ) : (
    <span className="w-[21.5px] h-[21.5px] shrink-0 rounded-[5px] bg-white border border-[#c9c9c9] shadow-[inset_0_1px_1px_rgba(0,0,0,0.08)]" />
  );
}

const CloudGlyph = (
  <svg viewBox="0 0 34 28" className="w-[26px] h-[21.5px] shrink-0" fill="none">
    <path d="M3 16c-1-6 4-9 8-9 3-5 12-5 15 0 5 2 6 7 5 11 0 4-5 7-9 7H12c-5 0-9-4-9-9z" fill="#dbe7f5" stroke="#6a6a6a" strokeWidth="3.2" />
    <path d="M10 15c2-5 8-6 12-3M16 11l2 8" stroke="#9db3d0" strokeWidth="2.5" />
  </svg>
);

function TreeChild({ name, on, sel, last }: { name: string; on?: boolean; sel?: boolean; last?: boolean }) {
  return (
    <div className={'relative h-[33.7px] flex items-center pl-[73px] ' + (sel ? 'bg-[#0055dc] text-white' : '')}>
      <div className={'absolute left-[45px] top-0 w-[2px] ' + (last ? 'h-[17px] bg-[#0b3f94]' : 'h-full bg-[#cdc8c8]')} />
      <div className={'absolute left-[47px] top-[15px] w-[14px] h-[3px] ' + (last ? 'bg-[#0b3f94]' : 'bg-[#d9d3d3]')} />
      <Check on={on} />
      <span className="w-[20px]" />
      {CloudGlyph}
      <span className="ml-[7px] text-[19.9px] tracking-[-0.1px]">{name}</span>
    </div>
  );
}

function Row({ k, h, alt, children }: { k: string; h: string; alt?: boolean; children: ReactNode }) {
  return (
    <div className={'shrink-0 flex items-center pt-[1px] ' + h + (alt ? ' bg-[#f1f1f1]' : ' bg-white')}>
      <div className="w-[175px] pl-[7px] shrink-0">{k}</div>
      <div className="pl-[9px] leading-[24.5px] grow">{children}</div>
    </div>
  );
}

function Band({ t }: { t: string }) {
  return <div className="h-[27.6px] shrink-0 bg-[#999999] text-white flex items-center pl-[1px] pt-[1px]">{t}</div>;
}

function Combo({ t }: { t: string }) {
  return (
    <div className="w-[386px] h-[31px] mb-[4px] rounded-[8px] bg-white border border-[#cfcfcf] shadow-[0_1px_2px_rgba(0,0,0,0.25)] flex items-center justify-between pl-[12px] pr-[3px]">
      <span>{t}</span>
      <svg viewBox="0 0 32 32" className="w-[25px] h-[25px]" fill="none">
        <rect width="32" height="32" rx="7" fill="#0a7aff" />
        <path d="M10.5 13l5.5-5.5 5.5 5.5M10.5 19l5.500 5.500 5.500-5.500" stroke="#fff" strokeWidth="2.6" strokeLinecap="round" strokeLinejoin="round" />
      </svg>
    </div>
  );
}

/* ---------- point cloud ---------- */

const outline = [
  [240, 800, 900], [260, 775, 930], [300, 738, 962], [340, 705, 975], [400, 665, 990], [450, 644, 997], [500, 637, 1000],
  [560, 638, 1000], [620, 643, 995], [680, 636, 988], [740, 622, 984], [800, 600, 985], [850, 572, 1002], [890, 548, 1022],
  [930, 562, 1038], [970, 580, 1022], [1000, 608, 988], [1050, 650, 940], [1100, 700, 912], [1150, 735, 895], [1200, 750, 880],
  [1250, 762, 860], [1300, 765, 843], [1350, 768, 828], [1400, 766, 820], [1435, 782, 815],
];
const leftRim = [[870, 246], [830, 246], [800, 265], [765, 292], [720, 340], [685, 390], [665, 440], [658, 500], [658, 600], [662, 680], [655, 740], [625, 800], [592, 850], [577, 890], [590, 950], [612, 990]];
const leftFaint = [[685, 385], [652, 430], [644, 500], [648, 600], [645, 680], [632, 740], [608, 800], [575, 850], [556, 890]];
const rightRim = [[890, 250], [930, 280], [955, 340], [972, 400], [985, 480], [980, 580], [968, 680], [958, 750], [968, 820], [990, 880], [1012, 930], [1005, 960]];

function buildCloud() {
  let seed = 20573;
  const rnd = () => {
    seed = (seed * 1664525 + 1013904223) % 4294967296;
    return seed / 4294967296;
  };
  const gauss = () => rnd() + rnd() + rnd() - 1.5;
  let d = '';
  const put = (x: number, y: number) => {
    d += `M${x.toFixed(1)} ${y.toFixed(1)}h2.6`;
  };
  for (let i = 0; i < outline.length - 1; i++) {
    const [y0, l0, r0] = outline[i];
    const [y1, l1, r1] = outline[i + 1];
    const area = ((y1 - y0) * (r0 - l0 + r1 - l1)) / 2;
    const n = area / (y0 < 850 ? 46 : y0 < 1150 ? 62 : 42);
    for (let k = 0; k < n; k++) {
      const f = rnd();
      const l = l0 + (l1 - l0) * f;
      const r = r0 + (r1 - r0) * f;
      let x = l + (r - l) * rnd();
      if (y0 < 1000) x = Math.round(x / 8) * 8 + gauss() * 3;
      put(x, y0 + (y1 - y0) * f);
    }
  }
  const rim = (pts: number[][], n: number, s: number) => {
    for (let i = 0; i < pts.length - 1; i++) {
      const len = Math.hypot(pts[i + 1][0] - pts[i][0], pts[i + 1][1] - pts[i][1]);
      for (let k = 0; k < len * n; k++) {
        const f = rnd();
        put(pts[i][0] + (pts[i + 1][0] - pts[i][0]) * f + gauss() * s, pts[i][1] + (pts[i + 1][1] - pts[i][1]) * f + gauss() * s);
      }
    }
  };
  rim(leftRim, 0.5, 13);
  rim(leftRim, 0.35, 4);
  rim(leftFaint, 0.3, 6);
  rim(rightRim, 0.35, 12);
  rim(rightRim, 0.22, 4);
  rim([[800, 262], [740, 310], [690, 380]], 1, 14);
  rim([[660, 700], [645, 760], [612, 825], [575, 885]], 0.8, 10);
  rim([[968, 840], [990, 885], [1015, 925]], 0.6, 10);
  return d;
}
const cloudPath = buildCloud();

function Scene() {
  return (
    <svg viewBox="1044 276 4057 2136" preserveAspectRatio="none" className="absolute inset-0 w-full h-full" fill="none">
      <g transform="translate(2700 700) scale(.4719 .4464)">
        <path d={cloudPath} stroke="#fff" strokeWidth="2.6" opacity=".85" />
        <path
          d="M142 283L831 157 1396 521 709 647zM156 1077L845 950 1410 1315 722 1441zM142 283L156 1077M831 157L845 950M1396 521L1410 1315M709 647L722 1441"
          stroke="#ecff3c"
          strokeWidth="3.2"
        />
        <path d="M767 1443h42M787 1420v46" stroke="#c3ccd4" strokeWidth="2.5" />
      </g>
      <path d="M3998.5 2364h996M3998.5 2361v7M4994 2361v7" stroke="#fff" strokeWidth="1.6" />
      <path d="M5047.500 2365V2341" stroke="#12ff12" strokeWidth="3" />
      <path d="M5047.500 2365l-21 5" stroke="#22a4f4" strokeWidth="4" />
      <path d="M5047.500 2365l11 8" stroke="#f01010" strokeWidth="3" />
      <g fontFamily={SANS} fontSize="20" textAnchor="middle">
        <text x="4496" y="2390" fill="#fff">30</text>
        <text x="5046" y="2334" fill="#12ff12">Y</text>
        <text x="5011.500" y="2376" fill="#22a4f4">Z</text>
        <text x="5068" y="2383" fill="#f01010">X</text>
      </g>
    </svg>
  );
}

const logs = [
  '[21:57:13] [ccGLWindow] Succesfully initialized PBO for faster depth picking',
  '[21:57:13] [Global Shift] Max abs. coord = 1e+04 / max abs. diag = 1e+06',
  '[21:57:15] [PLY][Comment] Created by Open3D',
  "[21:57:17] [I/O] File '/Users/cabbsir/Downloads/pcd/D06.ply' loaded successfully",
  "[22:24:27] New scalar field 'label' added to D06 - Cloud.segmented (value = 0)",
];

function Properties() {
  return (
    <div className="h-[870px] ml-[19px] mr-[20px] mt-[20px] border border-[#a9a9a9] border-t-[#7f7f7f] flex text-[19.9px] tracking-[-0.1px] text-black bg-[#e9e9e9] overflow-hidden">
      <div className="w-[581px] shrink-0 flex flex-col overflow-hidden">
        <div className="h-[26.500px] shrink-0 flex items-center text-[16.9px] text-[#242424] bg-[#ececec]">
          <div className="w-[175px] pl-[7px] border-r-2 border-[#bcbcbc] leading-[18px]">Property</div>
          <div className="grow pl-[7px] border-r border-[#bcbcbc] leading-[18px]">State/Value</div>
        </div>
        <Band t="CC Object" />
        <Row k="Name" h="h-[27.6px]" alt>D06 - Cloud.remaining.segmented</Row>
        <Row k="Visible" h="h-[30.660px]"><div className="pl-[2px]"><Check on /></div></Row>
        <Row k="Show name (in ..." h="h-[30.660px]" alt><div className="pl-[2px] flex"><Check /></div></Row>
        <Row k="Box dimensions" h="h-[76.650px]">X: 18.0164<br />Y: 11.2534<br />Z: 10.9605</Row>
        <Row k="Shifted box cen..." h="h-[76.650px]" alt>X: 93.7971<br />Y: 83.332<br />Z: 385.042</Row>
        <Row k="Global box cent..." h="h-[76.650px]">X: 93.797134<br />Y: 83.332047<br />Z: 385.041931</Row>
        <Row k="Info" h="h-[27.6px]" alt>Object ID: 267 - Children: 0</Row>
        <Row k="Current Display" h="h-[49.050px]"><Combo t="3D View 1" /></Row>
        <Band t="Cloud" />
        <Row k="Points" h="h-[27.6px]">9,409</Row>
        <Row k="Global shift" h="h-[27.6px]" alt>(0.00;0.00;0.00)</Row>
        <Row k="Global scale" h="h-[27.6px]">1.000000</Row>
        <Row k="Point size" h="h-[49.050px]" alt><Combo t="Default" /></Row>
        <Band t="Transformation history" />
        <div className="grow relative bg-[#ececec] pt-[14px]">
          <div className="h-full border border-[#dcdcdc] rounded-t-[8px] bg-[#e5e7e7] pt-[43px] pl-[23px] pr-[23px]">
            <div className="h-full bg-white border border-[#a9a9a9] border-t-2 border-t-[#7f7f7f] pl-[7px] pt-[6px] leading-[24.5px]">
              1.000000 0.000000 0.000000 0.000000<br />
              0.000000 1.000000 0.000000 0.000000<br />
              0.000000 0.000000 1.000000 0.000000<br />
              0.000000 0.000000 0.000000 1.000000
            </div>
          </div>
          <div className="absolute left-[130px] top-0 w-[320px] h-[31px] rounded-[8px] bg-white shadow-[0_1px_2px_rgba(0,0,0,0.3)] flex overflow-hidden">
            <div className="w-[91px] pr-[4px] bg-[#0a7aff] text-white flex items-center justify-center">Matrix</div>
            <div className="w-[133px] flex items-center justify-center border-r-2 border-[#dedede]">Axis/Angle</div>
            <div className="grow flex items-center justify-center pl-[4px]">Export</div>
          </div>
        </div>
      </div>
      <div className="grow bg-[#fafafa] border-l-2 border-[#e0e0e0] pt-[5px] flex justify-center">
        <div className="w-[12px] h-[693px] rounded-full bg-[#6c6c6c]" />
      </div>
    </div>
  );
}

export default function App() {
  return (
    <div className="relative w-[4096px] h-[2217px] overflow-hidden bg-white pt-[58px] pl-[86px] font-[Inter,'Noto_Sans_CJK_SC',sans-serif]">
      <div className="w-[3924px] h-[2045px] rounded-[18px] overflow-hidden flex flex-col bg-[#e6e6e6] shadow-[0_0_2px_rgba(0,0,0,0.7),0_38px_76px_rgba(0,0,0,0.46)]">
        {/* title bar */}
        <div className="relative h-[43px] shrink-0 bg-[#eee6ee] flex items-center pl-[12px]">
          <Lights gap="gap-[12px]" />
          <div className="absolute inset-0 flex items-center justify-center text-[20px] tracking-[0.150px] font-bold text-[#3c383c]">CloudCompare v2.12.0 (Kyiv) [64-bit]</div>
        </div>

        {/* main toolbar */}
        <div className="h-[68px] shrink-0 flex items-center border-t-2 border-t-[#d0cbd0] border-b-[3px] border-b-[#a3a3a3] bg-gradient-to-b from-[#ebebeb] to-[#bbbbbb]">
          <Handle first />
          {groups.map((g, i) => (
            <div key={i} className="h-full flex items-center">
              {i > 0 && <Sep />}
              {g.map((ic, j) => <Slot key={j}>{ic}</Slot>)}
            </div>
          ))}
          {handled.map((g, i) => (
            <div key={i} className="h-full flex items-center">
              <Handle />
              {g.map((ic, j) => <Slot key={j}>{ic}</Slot>)}
            </div>
          ))}
        </div>

        <div className="h-[1893px] shrink-0 flex">
          {/* left toolbar */}
          <div className="w-[67px] pl-[2px] shrink-0 flex flex-col bg-gradient-to-r from-[#ececec] to-[#bababa] border-r-2 border-[#9d9d9d]">
            <HHandle n={5} first />
            {leftIcons.map((ic, i) => <VSlot key={i} on={i === 4}>{ic}</VSlot>)}
          </div>

          <div className="grow flex flex-col">
            <div className="h-[1681px] shrink-0 flex">
              <div className="w-[647px] shrink-0 flex flex-col border-r-2 border-[#8d8d8d]">
                <DockHeader title="DB Tree" cls="h-[33px]" />
                <div className="ml-[19px] mr-[20px] mt-[19px] h-[666px] shrink-0 bg-white border border-[#a9a9a9] border-t-2 border-t-[#7f7f7f] text-black">
                  <div className="h-[33.7px] flex items-center pl-[7px] text-[19.9px] tracking-[-0.300px]">
                    <svg viewBox="0 0 24 16" className="w-[18px] h-[12px]"><path d="M0 0h24L12 16z" fill="#4d322f" /></svg>
                    <span className="w-[17px]" />
                    <Check on />
                    <svg viewBox="0 0 30 30" className="w-[22px] h-[22px] ml-[20px]" fill="none">
                      <path d="M2 2l14 3 10 4v18l-12 2L3 24z" fill="#8f5408" />
                      <path d="M3 9l11-4 13 3v14L15 30 2 23z" fill="#e5931d" />
                      <path d="M3 9l11-4 13 3-12 8z" fill="#f4b550" />
                    </svg>
                    <span className="ml-[12px]">D06.ply (/Users/cabbsir/Downloads/pcd)</span>
                  </div>
                  <TreeChild name="D06 - Cloud.segmented" />
                  <TreeChild name="D06 - Cloud.remaining.remaining" />
                  <TreeChild name="D06 - Cloud.remaining.segmented" on sel last />
                </div>
                <DockHeader title="Properties" cls="h-[34px] mt-[19px] border-t-2 border-t-[#9c9c9c]" />
                <Properties />
              </div>
              {/* 3D view */}
              <div className="grow flex flex-col bg-[#b8b8b8]">
                <div className="relative h-[42.500px] shrink-0 rounded-t-[10px] bg-gradient-to-b from-[#e9e9e9] to-[#cdcdcd] flex items-center pl-[12px]">
                  <Lights gap="gap-[14.500px]" />
                  <div className="absolute inset-0 flex items-center justify-center pt-[1px] text-[19.9px] tracking-[-0.100px] text-[#242424]">3D View 1</div>
                </div>
                <div className="relative grow bg-[linear-gradient(180deg,#008cff_0%,#006bc8_20%,#003a68_53%,#00080c_94%,#000_100%)]">
                  <Scene />
                </div>
              </div>
            </div>
            {/* console */}
            <DockHeader title="Console" cls="h-[36px] border-t-2 border-t-[#8f8f8f]" close />
            <div className="mt-[19px] ml-[19px] mr-[19px] h-[138px] flex border border-[#a9a9a9] border-t-2 border-t-[#7f7f7f] bg-white text-black">
              <div className="grow flex flex-col">
                <div className="h-[6px] bg-[#f1f1f1] relative">
                  <span className="absolute left-[11px] top-0 w-[5px] h-[1px] bg-[#333]" />
                  <span className="absolute left-[90px] top-0 w-[5px] h-[1px] bg-[#333]" />
                  <span className="absolute left-[102px] top-0 w-[5px] h-[1px] bg-[#333]" />
                  <span className="absolute left-[220px] top-0 w-[5px] h-[1px] bg-[#333]" />
                </div>
                {logs.map((l, i) => (
                  <div key={i} className={'h-[26.060px] flex items-center pl-[8px] text-[18.400px] ' + (i % 2 ? 'bg-[#f1f1f1]' : '')}>{l}</div>
                ))}
              </div>
              <div className="w-[24px] bg-[#fafafa] border-l-2 border-[#dedede] flex justify-center items-end pb-[5px]">
                <div className="w-[12px] h-[28px] rounded-full bg-[#6c6c6c]" />
              </div>
            </div>
          </div>

          {/* right toolbar */}
          <div className="w-[101px] shrink-0 flex flex-col bg-gradient-to-r from-[#ececec] to-[#b8b8b8] border-l-2 border-l-[#f4f4f4] border-r-2 border-r-[#a0a0a0]">
            <HHandle n={9} first />
            {rightA.map((ic, i) => <VSlot key={i}>{ic}</VSlot>)}
            <HHandle n={9} />
            {rightB.map((ic, i) => <VSlot key={i}>{ic}</VSlot>)}
            <div className="h-[40px] shrink-0 flex items-center justify-center text-[16.400px] tracking-[-0.200px] text-[#1d1d1d] whitespace-nowrap">CSF Filter</div>
            {rightC.map((ic, i) => <VSlot key={i}>{ic}</VSlot>)}
          </div>
        </div>

        <div className="grow border-t-2 border-[#5d5d5d] bg-gradient-to-b from-[#e2e2e2] to-[#a2a2a2]" />
      </div>

      {/* annotations */}
      <div className="absolute left-[166px] top-[208px] w-[571px] h-[210px] border-[6px] border-[#cf0211] rounded-[4px]" />
      <div className="absolute left-[2063px] top-[100px] w-[75px] h-[82px] border-[6px] border-[#cf0211] rounded-[4px]" />
      <svg viewBox="0 0 1568 849" preserveAspectRatio="none" className="absolute inset-0 w-full h-full pointer-events-none" fill="none">
        <path d="M426 291L282 176M788 74L729 152" stroke="#cf0211" strokeWidth="2.5" />
        <path d="M274.500 170.500l12.500 3-6.500 8.500zM724 158.500l2-13 8.500 6z" fill="#cf0211" />
      </svg>
      <div className="absolute left-[1784px] top-[428px] text-[31px] leading-[44px] text-white flex items-center whitespace-nowrap">
        2.点击
        <svg viewBox="0 0 32 32" className="w-[25px] h-[25px] mx-[7px]"><path d="M16 5v22M5 16h22" stroke="#33424c" strokeWidth="7" strokeLinecap="round" /></svg>
        添加标签
      </div>
      <div className="absolute left-[1099px] top-[782px] text-[31px] leading-[44px] text-white whitespace-nowrap">1.选择需要加标签的叶片</div>
    </div>
  );
}
